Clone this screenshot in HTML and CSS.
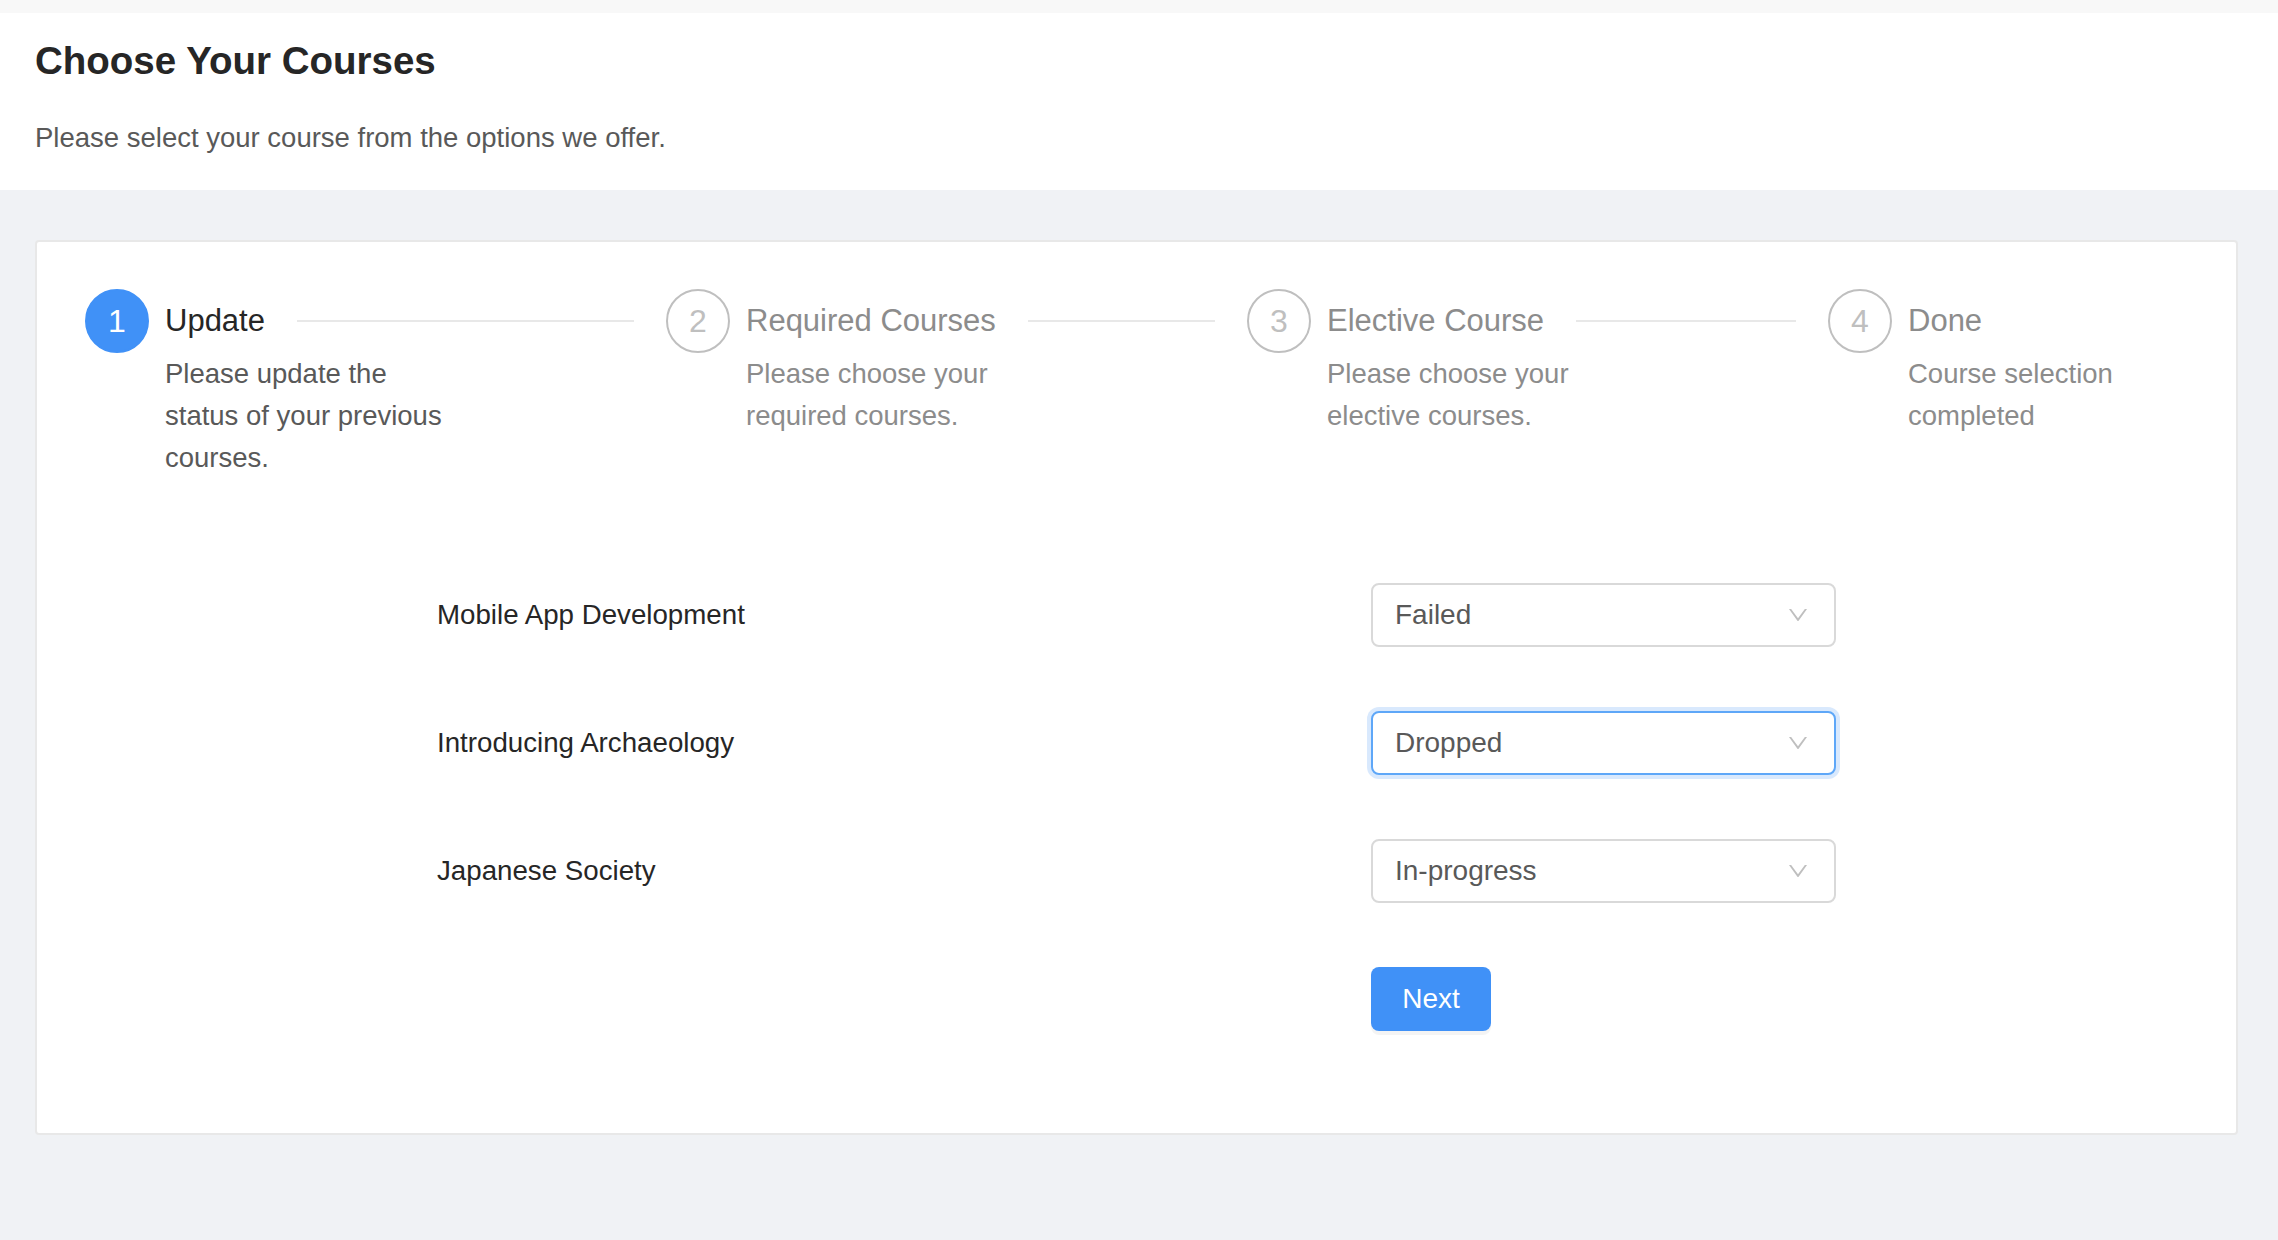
FILE: index.html
```html
<!DOCTYPE html>
<html lang="en">
<head>
<meta charset="utf-8">
<title>Choose Your Courses</title>
<link rel="stylesheet" href="styles.css">
</head>
<body>
<header class="page-header">
  <h1 class="page-title">Choose Your Courses</h1>
  <p class="page-subtitle">Please select your course from the options we offer.</p>
</header>
<main class="page-body">
  <section class="card">
    <div class="steps">
      <div class="step step-process">
        <div class="step-icon">1</div>
        <div class="step-content">
          <div class="step-title">Update</div>
          <div class="step-desc">Please update the status of your previous courses.</div>
        </div>
      </div>
      <div class="step step-wait">
        <div class="step-icon">2</div>
        <div class="step-content">
          <div class="step-title">Required Courses</div>
          <div class="step-desc">Please choose your required courses.</div>
        </div>
      </div>
      <div class="step step-wait">
        <div class="step-icon">3</div>
        <div class="step-content">
          <div class="step-title">Elective Course</div>
          <div class="step-desc">Please choose your elective courses.</div>
        </div>
      </div>
      <div class="step step-wait">
        <div class="step-icon">4</div>
        <div class="step-content">
          <div class="step-title">Done</div>
          <div class="step-desc">Course selection completed</div>
        </div>
      </div>
    </div>

    <form class="course-form">
      <div class="form-row">
        <label class="form-label">Mobile App Development</label>
        <div class="select">
          <span class="select-value">Failed</span>
          <svg class="select-arrow" viewBox="0 0 1024 1024" width="24" height="24"><path d="M884 256h-75c-5.1 0-9.9 2.5-12.9 6.6L512 654.2 227.9 262.6c-3-4.1-7.8-6.6-12.9-6.6h-75c-6.5 0-10.300 7.4-6.5 12.7l352.6 486.1c12.8 17.6 39 17.6 51.7 0l352.6-486.1c3.9-5.3.1-12.7-6.4-12.7z"/></svg>
        </div>
      </div>
      <div class="form-row">
        <label class="form-label">Introducing Archaeology</label>
        <div class="select select-focused">
          <span class="select-value">Dropped</span>
          <svg class="select-arrow" viewBox="0 0 1024 1024" width="24" height="24"><path d="M884 256h-75c-5.1 0-9.9 2.5-12.9 6.6L512 654.2 227.9 262.6c-3-4.1-7.8-6.6-12.9-6.6h-75c-6.5 0-10.3 7.4-6.5 12.7l352.6 486.1c12.8 17.6 39 17.6 51.7 0l352.6-486.1c3.9-5.3.1-12.7-6.4-12.7z"/></svg>
        </div>
      </div>
      <div class="form-row">
        <label class="form-label">Japanese Society</label>
        <div class="select">
          <span class="select-value">In-progress</span>
          <svg class="select-arrow" viewBox="0 0 1024 1024" width="24" height="24"><path d="M884 256h-75c-5.1 0-9.9 2.5-12.9 6.6L512 654.2 227.9 262.6c-3-4.1-7.8-6.6-12.9-6.6h-75c-6.5 0-10.3 7.4-6.5 12.7l352.6 486.1c12.8 17.6 39 17.6 51.7 0l352.6-486.1c3.9-5.3.1-12.7-6.4-12.7z"/></svg>
        </div>
      </div>
      <div class="form-row">
        <span class="form-label"></span>
        <div class="form-actions">
          <button type="button" class="btn-primary">Next</button>
        </div>
      </div>
    </form>
  </section>
</main>
</body>
</html>
```

FILE: styles.css
```css
* {
  box-sizing: border-box;
}

html, body {
  margin: 0;
  padding: 0;
}

body {
  min-height: 100vh;
  background: #f0f2f5;
  font-family: "Liberation Sans", Arial, Helvetica, sans-serif;
  color: #595959;
}

.page-header {
  background: #ffffff;
  border-top: 13px solid #f8f8f8;
  padding: 21px 35px 31px;
}

.page-title {
  margin: 0;
  font-size: 38.5px;
  line-height: 54px;
  font-weight: 700;
  color: #262626;
}

.page-subtitle {
  margin: 29px 0 0;
  font-size: 27.5px;
  line-height: 42px;
  color: #595959;
}

.page-body {
  padding: 50px 40px 0 35px;
}

.card {
  background: #ffffff;
  border: 2px solid #e8e8e8;
  border-radius: 4px;
  padding: 47px 48px 46px;
}

/* Steps */
.steps {
  display: flex;
}

.step {
  flex: 1 1 0;
  min-width: 0;
  display: flex;
  overflow: hidden;
}

.step + .step {
  padding-left: 32px;
}

.step:last-child {
  flex: none;
}

.step-icon {
  flex: none;
  width: 64px;
  height: 64px;
  border-radius: 50%;
  border: 2px solid #bfbfbf;
  margin-right: 16px;
  display: flex;
  align-items: center;
  justify-content: center;
  font-size: 32px;
  color: #bfbfbf;
}

.step-content {
  min-width: 0;
}

.step-title {
  position: relative;
  display: inline-block;
  padding-right: 32px;
  font-size: 31px;
  line-height: 64px;
  white-space: nowrap;
  color: #8c8c8c;
}

.step-title::after {
  content: "";
  position: absolute;
  top: 31px;
  left: 100%;
  width: 9999px;
  height: 2px;
  background: #e8e8e8;
}

.step:last-child .step-title::after {
  display: none;
}

.step-desc {
  max-width: 280px;
  font-size: 27.5px;
  line-height: 42px;
  padding-bottom: 24px;
  color: #8c8c8c;
}

.step-process .step-icon {
  background: #4091f7;
  border-color: #4091f7;
  color: #ffffff;
}

.step-process .step-title {
  color: #262626;
}

.step-process .step-desc {
  color: #595959;
}

/* Form */
.course-form {
  margin-top: 72px;
  padding-left: 352px;
}

.form-row {
  display: grid;
  grid-template-columns: 934px 465px;
  align-items: center;
  height: 80px;
  margin-bottom: 48px;
}

.form-label {
  font-size: 27.7px;
  color: #262626;
}

.select {
  height: 64px;
  border: 2px solid #d9d9d9;
  border-radius: 8px;
  background: #ffffff;
  padding: 0 24px 0 22px;
  display: flex;
  align-items: center;
  justify-content: space-between;
  font-size: 28px;
  color: #595959;
}

.select-focused {
  border-color: #5ea7f8;
  box-shadow: 0 0 0 4px rgba(64, 145, 247, 0.2);
}

.select-arrow {
  fill: #bfbfbf;
}

.form-actions {
  display: flex;
}

.btn-primary {
  height: 64px;
  width: 120px;
  border: none;
  border-radius: 8px;
  background: #4091f7;
  color: #ffffff;
  font-family: "Liberation Sans", Arial, Helvetica, sans-serif;
  font-size: 28px;
  box-shadow: 0 4px 0 rgba(0, 0, 0, 0.045);
  cursor: pointer;
}
```
